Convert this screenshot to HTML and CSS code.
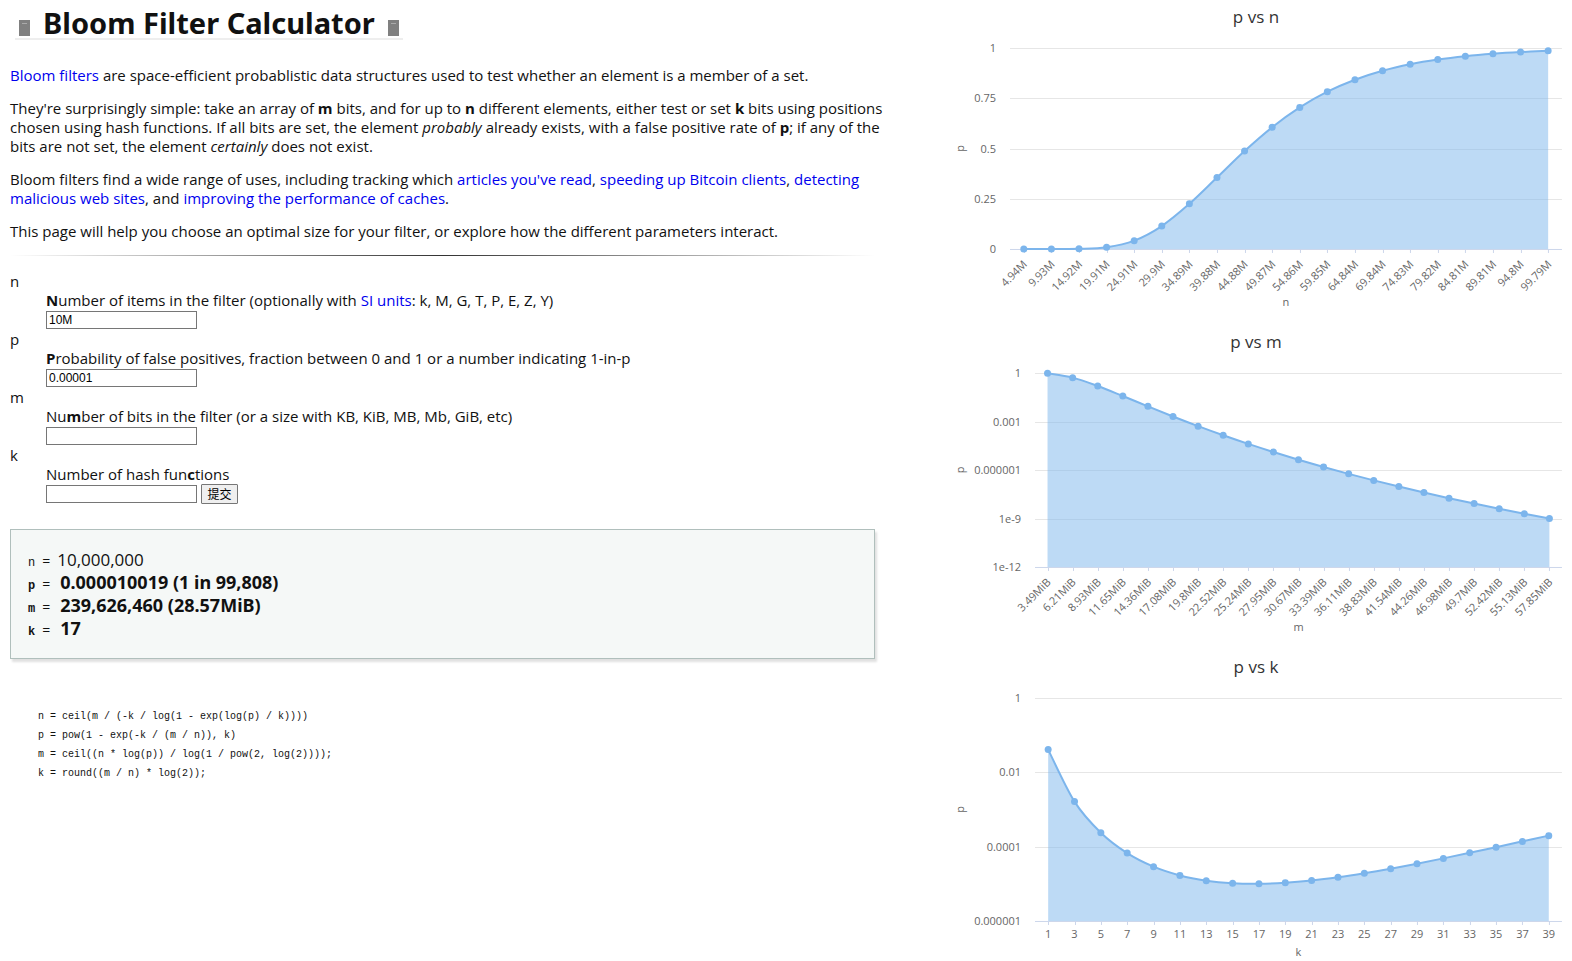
FILE: index.html
```html
<!DOCTYPE html>
<html lang="en">
<head>
<meta charset="utf-8">
<title>Bloom Filter Calculator</title>
<link rel="stylesheet" href="styles.css">
</head>
<body>
<div class="page">
  <main class="content">
    <h1 class="title"><span class="title-mark"></span>Bloom Filter Calculator<span class="title-mark"></span></h1>

    <p><a href="#bloom">Bloom filters</a> are space-efficient probablistic data structures used to test whether an element is a member of a set.</p>
    <p>They're surprisingly simple: take an array of <b>m</b> bits, and for up to <b>n</b> different elements, either test or set <b>k</b> bits using positions chosen using hash functions. If all bits are set, the element <i>probably</i> already exists, with a false positive rate of <b>p</b>; if any of the bits are not set, the element <i>certainly</i> does not exist.</p>
    <p>Bloom filters find a wide range of uses, including tracking which <a href="#articles">articles you've read</a>, <a href="#bitcoin">speeding up Bitcoin clients</a>, <a href="#malicious">detecting malicious web sites</a>, and <a href="#caches">improving the performance of caches</a>.</p>
    <p>This page will help you choose an optimal size for your filter, or explore how the different parameters interact.</p>

    <hr class="rule">

    <form class="params">
      <dl>
        <dt>n</dt>
        <dd><label for="n"><b>N</b>umber of items in the filter (optionally with <a href="#si">SI units</a>: k, M, G, T, P, E, Z, Y)</label>
          <div class="field"><input id="n" type="text" value="10M"></div></dd>
        <dt>p</dt>
        <dd><label for="p"><b>P</b>robability of false positives, fraction between 0 and 1 or a number indicating 1-in-p</label>
          <div class="field"><input id="p" type="text" value="0.00001"></div></dd>
        <dt>m</dt>
        <dd><label for="m">Nu<b>m</b>ber of bits in the filter (or a size with KB, KiB, MB, Mb, GiB, etc)</label>
          <div class="field"><input id="m" type="text"></div></dd>
        <dt>k</dt>
        <dd><label for="k">Number of hash fun<b>c</b>tions</label>
          <div class="field"><input id="k" type="text"><button type="submit">提交</button></div></dd>
      </dl>
    </form>

    <section class="result">
      <div><code>n</code><span class="eq">=</span>10,000,000</div>
      <div class="strong"><code>p</code><span class="eq">=</span>0.000010019 (1 in 99,808)</div>
      <div class="strong"><code>m</code><span class="eq">=</span>239,626,460 (28.57MiB)</div>
      <div class="strong"><code>k</code><span class="eq">=</span>17</div>
    </section>

    <pre class="formulas">n = ceil(m / (-k / log(1 - exp(log(p) / k))))
p = pow(1 - exp(-k / (m / n)), k)
m = ceil((n * log(p)) / log(1 / pow(2, log(2))));
k = round((m / n) * log(2));</pre>
  </main>

  <aside class="charts">
    <svg class="chart" id="chart-n" viewBox="0 0 632 311" role="img" aria-label="p vs n"></svg>
    <svg class="chart" id="chart-m" viewBox="0 0 632 311" role="img" aria-label="p vs m"></svg>
    <svg class="chart" id="chart-k" viewBox="0 0 632 311" role="img" aria-label="p vs k"></svg>
  </aside>
</div>
<script src="charts.js"></script>
</body>
</html>
```
FILE: styles.css
```css
body {
  margin: 0;
  background: #fff;
  color: #111;
  font-family: "Open Sans", "Noto Sans CJK SC", sans-serif;
  font-size: 15px;
  line-height: 19px;
}

a {
  color: #0000ee;
  text-decoration: none;
}

.page {
  display: flex;
  justify-content: space-between;
  align-items: flex-start;
}

.content {
  width: 55%;
  margin-left: 10px;
}

.content p {
  margin: 0 -20px 14px 0;
}

.title {
  display: flex;
  align-items: flex-end;
  gap: 13px;
  width: fit-content;
  margin: 8px 0 26px 5px;
  padding: 0 4px;
  border-bottom: 2px solid #eee;
  font-family: "Noto Sans", sans-serif;
  font-size: 29px;
  font-weight: 700;
  line-height: 30px;
}

.title-mark {
  width: 11px;
  height: 16px;
  margin-bottom: 2px;
  background: linear-gradient(#aaa, #aaa) 3px 3px / 5px 1px no-repeat #808080;
}

.rule {
  height: 1px;
  margin: 0 0 16px;
  border: 0;
  background: linear-gradient(to right, transparent, #333, transparent);
}

.params dl {
  margin: 0;
}

.params dd {
  margin: 0 0 0 36px;
}

.params label {
  display: block;
}

.field {
  display: flex;
  align-items: center;
  gap: 4px;
  height: 20px;
}

.field input {
  box-sizing: border-box;
  width: 151px;
  height: 18px;
  padding: 0 2px;
  border: 1px solid #767676;
  border-radius: 0;
  background: #fff;
  color: #000;
  font: 12px "Liberation Sans", Arial, sans-serif;
}

.field button {
  box-sizing: border-box;
  width: 37px;
  height: 20px;
  padding: 0;
  border: 1px solid #767676;
  border-radius: 1px;
  background: #efefef;
  color: #000;
  font: 12px/16px "Noto Sans CJK SC", sans-serif;
}

.result {
  margin-top: 25px;
  padding: 18px 17px;
  border: 1px solid #b0bfbc;
  background: #f5f8f7;
  box-shadow: 2px 3px 2px rgba(0, 0, 0, 0.12);
  font-size: 17px;
  line-height: 23px;
}

.result code {
  font: 12px/12px "Liberation Mono", monospace;
}

.result .strong {
  font-family: "Noto Sans", sans-serif;
  font-size: 18px;
}

.result .strong,
.result .strong code {
  font-weight: 700;
}

.eq {
  margin: 0 7px;
  font-size: 14px;
  font-weight: 400;
  line-height: 14px;
}

.strong .eq {
  margin-right: 10px;
}

.formulas {
  margin: 48px 0 0 28px;
  font: 10px/19px "Liberation Mono", monospace;
}

.charts {
  display: flex;
  flex-direction: column;
  gap: 14px;
  width: 40.2%;
}

.chart {
  display: block;
  width: 100%;
  height: auto;
  font-family: "Open Sans", sans-serif;
}

.chart-title {
  fill: #333;
  font-size: 17px;
  text-anchor: middle;
}

.axis-title {
  fill: #666;
  font-size: 11px;
  text-anchor: middle;
}

.tick-label {
  fill: #666;
  font-size: 11px;
}

.tick-label.end {
  text-anchor: end;
}

.tick-label.middle {
  text-anchor: middle;
}

.grid {
  stroke: #e6e6e6;
}

.axis {
  stroke: #ccd6eb;
}

.area {
  fill: #7cb5ec;
  fill-opacity: 0.5;
}

.line {
  fill: none;
  stroke: #7cb5ec;
  stroke-width: 2;
}

.dot {
  fill: #7cb5ec;
}
```
FILE: charts.js
```js
const N = 1e7, M = 239626460, K = 17, MIB = 8 * 1024 * 1024;
const RIGHT = 622;

const rate = (n, m, k) => Math.pow(1 - Math.exp(-k * n / m), k);

function add(svg, tag, cls, attrs, text) {
  const el = document.createElementNS("http://www.w3.org/2000/svg", tag);
  el.setAttribute("class", cls);
  for (const key in attrs) el.setAttribute(key, attrs[key]);
  if (text !== undefined) el.textContent = text;
  svg.appendChild(el);
}

function spline(pts) {
  let d = `M${pts[0][0]} ${pts[0][1]}`;
  for (let i = 0; i < pts.length - 1; i++) {
    const a = pts[i - 1] || pts[i], b = pts[i], c = pts[i + 1], e = pts[i + 2] || c;
    d += `C${b[0] + (c[0] - a[0]) / 6} ${b[1] + (c[1] - a[1]) / 6} ${c[0] - (e[0] - b[0]) / 6} ${c[1] - (e[1] - b[1]) / 6} ${c[0]} ${c[1]}`;
  }
  return d;
}

function draw(o) {
  const svg = document.getElementById("chart-" + o.name);
  const step = (RIGHT - o.left) / o.values.length;
  const pts = o.values.map((v, i) => [o.left + step * (i + 0.5), o.top + (o.bottom - o.top) * o.scale(v)]);

  add(svg, "text", "chart-title", { x: 316, y: 23 }, "p vs " + o.name);
  o.yLabels.forEach((label, i) => {
    const y = Math.round(o.top + (o.bottom - o.top) * i / (o.yLabels.length - 1)) + 0.5;
    if (i < o.yLabels.length - 1) add(svg, "path", "grid", { d: `M${o.left} ${y}H${RIGHT}` });
    add(svg, "text", "tick-label end", { x: o.left - 14, y: y + 4 }, label);
  });

  const curve = spline(pts);
  add(svg, "path", "area", { d: `${curve}V${o.bottom}H${pts[0][0]}Z` });
  add(svg, "path", "axis", { d: `M${o.left} ${o.bottom + 0.5}H${RIGHT}` });
  pts.forEach(([x], i) => {
    add(svg, "path", "axis", { d: `M${Math.round(x) + 0.5} ${o.bottom}v4` });
    if (o.rotate) add(svg, "text", "tick-label end", { transform: `translate(${x + 4} ${o.bottom + 16}) rotate(-45)` }, o.xLabels[i]);
    else add(svg, "text", "tick-label middle", { x, y: o.bottom + 17 }, o.xLabels[i]);
  });
  add(svg, "path", "line", { d: curve });
  pts.forEach(([x, y]) => add(svg, "circle", "dot", { cx: x, cy: y, r: 3.5 }));

  add(svg, "text", "axis-title", { transform: `translate(24 ${(o.top + o.bottom) / 2}) rotate(-90)` }, "p");
  add(svg, "text", "axis-title", { x: (o.left + RIGHT) / 2, y: 306 }, o.name);
}

const nLabels = ["4.94", "9.93", "14.92", "19.91", "24.91", "29.9", "34.89", "39.88", "44.88", "49.87", "54.86", "59.85", "64.84", "69.84", "74.83", "79.82", "84.81", "89.81", "94.8", "99.79"];
draw({
  name: "n", left: 70, top: 48, bottom: 249, rotate: true,
  values: nLabels.map(v => rate(v * 1e6, M, K)),
  scale: v => 1 - v,
  xLabels: nLabels.map(v => v + "M"),
  yLabels: ["1", "0.75", "0.5", "0.25", "0"]
});

const mLabels = ["3.49", "6.21", "8.93", "11.65", "14.36", "17.08", "19.8", "22.52", "25.24", "27.95", "30.67", "33.39", "36.11", "38.83", "41.54", "44.26", "46.98", "49.7", "52.42", "55.13", "57.85"];
draw({
  name: "m", left: 95, top: 48, bottom: 242, rotate: true,
  values: mLabels.map(v => rate(N, v * MIB, K)),
  scale: v => -Math.log10(v) / 12,
  xLabels: mLabels.map(v => v + "MiB"),
  yLabels: ["1", "0.001", "0.000001", "1e-9", "1e-12"]
});

const ks = Array.from({ length: 20 }, (_, i) => 2 * i + 1);
draw({
  name: "k", left: 95, top: 48, bottom: 271,
  values: ks.map(k => rate(N, M, k)),
  scale: v => -Math.log10(v) / 6,
  xLabels: ks,
  yLabels: ["1", "0.01", "0.0001", "0.000001"]
});
```
